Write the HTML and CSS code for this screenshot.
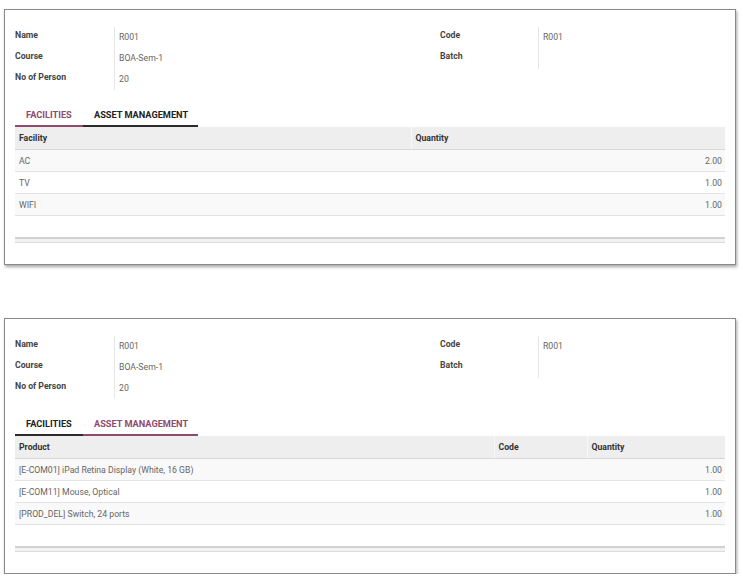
FILE: index.html
```html
<!DOCTYPE html>
<html lang="en">
<head>
  <meta charset="UTF-8" />
  <title>Rooms</title>
  <link rel="stylesheet" href="styles.css">
</head>
<body>

  <!-- Room with facilities tab open -->
  <div class="sheet">
    <div class="groups">
      <div class="group group-left">
        <div class="field"><span class="label">Name</span><span class="value">R001</span></div>
        <div class="field"><span class="label">Course</span><span class="value">BOA-Sem-1</span></div>
        <div class="field"><span class="label">No of Person</span><span class="value">20</span></div>
      </div>
      <div class="group group-right">
        <div class="field"><span class="label">Code</span><span class="value">R001</span></div>
        <div class="field"><span class="label">Batch</span><span class="value"></span></div>
      </div>
    </div>

    <div class="tabs">
      <div class="tab tab-first active">FACILITIES</div>
      <div class="tab tab-second">ASSET MANAGEMENT</div>
    </div>

    <table class="list">
      <colgroup>
        <col style="width: 396px">
        <col>
      </colgroup>
      <thead>
        <tr><th>Facility</th><th>Quantity</th></tr>
      </thead>
      <tbody>
        <tr><td>AC</td><td class="num">2.00</td></tr>
        <tr><td>TV</td><td class="num">1.00</td></tr>
        <tr><td>WIFI</td><td class="num">1.00</td></tr>
        <tr class="blank"><td></td><td></td></tr>
      </tbody>
    </table>
    <div class="list-foot"></div>
  </div>

  <!-- Same room with asset management tab open -->
  <div class="sheet">
    <div class="groups">
      <div class="group group-left">
        <div class="field"><span class="label">Name</span><span class="value">R001</span></div>
        <div class="field"><span class="label">Course</span><span class="value">BOA-Sem-1</span></div>
        <div class="field"><span class="label">No of Person</span><span class="value">20</span></div>
      </div>
      <div class="group group-right">
        <div class="field"><span class="label">Code</span><span class="value">R001</span></div>
        <div class="field"><span class="label">Batch</span><span class="value"></span></div>
      </div>
    </div>

    <div class="tabs">
      <div class="tab tab-first">FACILITIES</div>
      <div class="tab tab-second active">ASSET MANAGEMENT</div>
    </div>

    <table class="list">
      <colgroup>
        <col style="width: 479px">
        <col style="width: 93px">
        <col>
      </colgroup>
      <thead>
        <tr><th>Product</th><th>Code</th><th>Quantity</th></tr>
      </thead>
      <tbody>
        <tr><td>[E-COM01] iPad Retina Display (White, 16 GB)</td><td></td><td class="num">1.00</td></tr>
        <tr><td>[E-COM11] Mouse, Optical</td><td></td><td class="num">1.00</td></tr>
        <tr><td>[PROD_DEL] Switch, 24 ports</td><td></td><td class="num">1.00</td></tr>
        <tr class="blank"><td></td><td></td><td></td></tr>
      </tbody>
    </table>
    <div class="list-foot"></div>
  </div>

</body>
</html>
```

FILE: styles.css
```css
:root {
  --accent: #8f4a6e;
  --label-color: #444;
  --value-color: #666;
  --line: #e3e3e3;
}

* {
  box-sizing: border-box;
  margin: 0;
  padding: 0;
}

body {
  background: #fff;
  font-family: Roboto, "Liberation Sans", sans-serif;
  font-size: 8.7px;
  color: var(--value-color);
  padding: 9px 0 0 4px;
}

.sheet {
  width: 732px;
  background: #fff;
  border: 1px solid #8a8a8a;
  box-shadow: 1px 2px 3px rgba(0, 0, 0, 0.35);
  padding: 17px 10px 21px 10px;
  margin-bottom: 53px;
}

.sheet:last-child {
  margin-bottom: 0;
}

/* form groups */
.groups {
  display: flex;
}

.group-left {
  width: 425px;
}

.group-right {
  flex: 1;
}

.field {
  display: flex;
  height: 21px;
}

.label {
  width: 99px;
  font-weight: 700;
  color: var(--label-color);
  padding-top: 3px;
}

.group-right .label {
  width: 98px;
}

.value {
  border-left: 1px solid #e6e6e6;
  padding: 5px 0 0 4px;
  flex: 1;
}

/* notebook tabs */
.tabs {
  display: flex;
  margin-top: 14px;
  height: 23px;
}

.tab {
  font-size: 9.2px;
  font-weight: 700;
  color: #222;
  white-space: nowrap;
  padding: 5px 0 0 11px;
  border-bottom: 2px solid #2b2b2b;
}

.tab-first {
  width: 68px;
}

.tab-second {
  width: 115px;
}

.tab.active {
  color: var(--accent);
  border-bottom-color: var(--accent);
}

/* one2many list */
.list {
  width: 100%;
  border-collapse: collapse;
  table-layout: fixed;
}

.list th {
  background: #eee;
  color: #333;
  font-weight: 700;
  text-align: left;
  height: 22px;
  padding: 0 4px;
  border-bottom: 1px solid #d8d8d8;
  border-left: 1px solid #f8f8f8;
}

.list th:first-child {
  border-left: none;
}

.list td {
  height: 22px;
  padding: 1px 4px 0 4px;
  border-bottom: 1px solid var(--line);
  white-space: nowrap;
}

.list tbody tr:nth-child(odd) td {
  background: #f9f9f9;
}

.list tr.blank td {
  background: #fff;
  border-bottom: none;
}

.list td.num {
  text-align: right;
  padding-right: 3px;
}

.list-foot {
  height: 6px;
  border-top: 2px solid #d2d2d2;
  border-bottom: 1px solid #dcdcdc;
  background: #f2f2f2;
}
```
